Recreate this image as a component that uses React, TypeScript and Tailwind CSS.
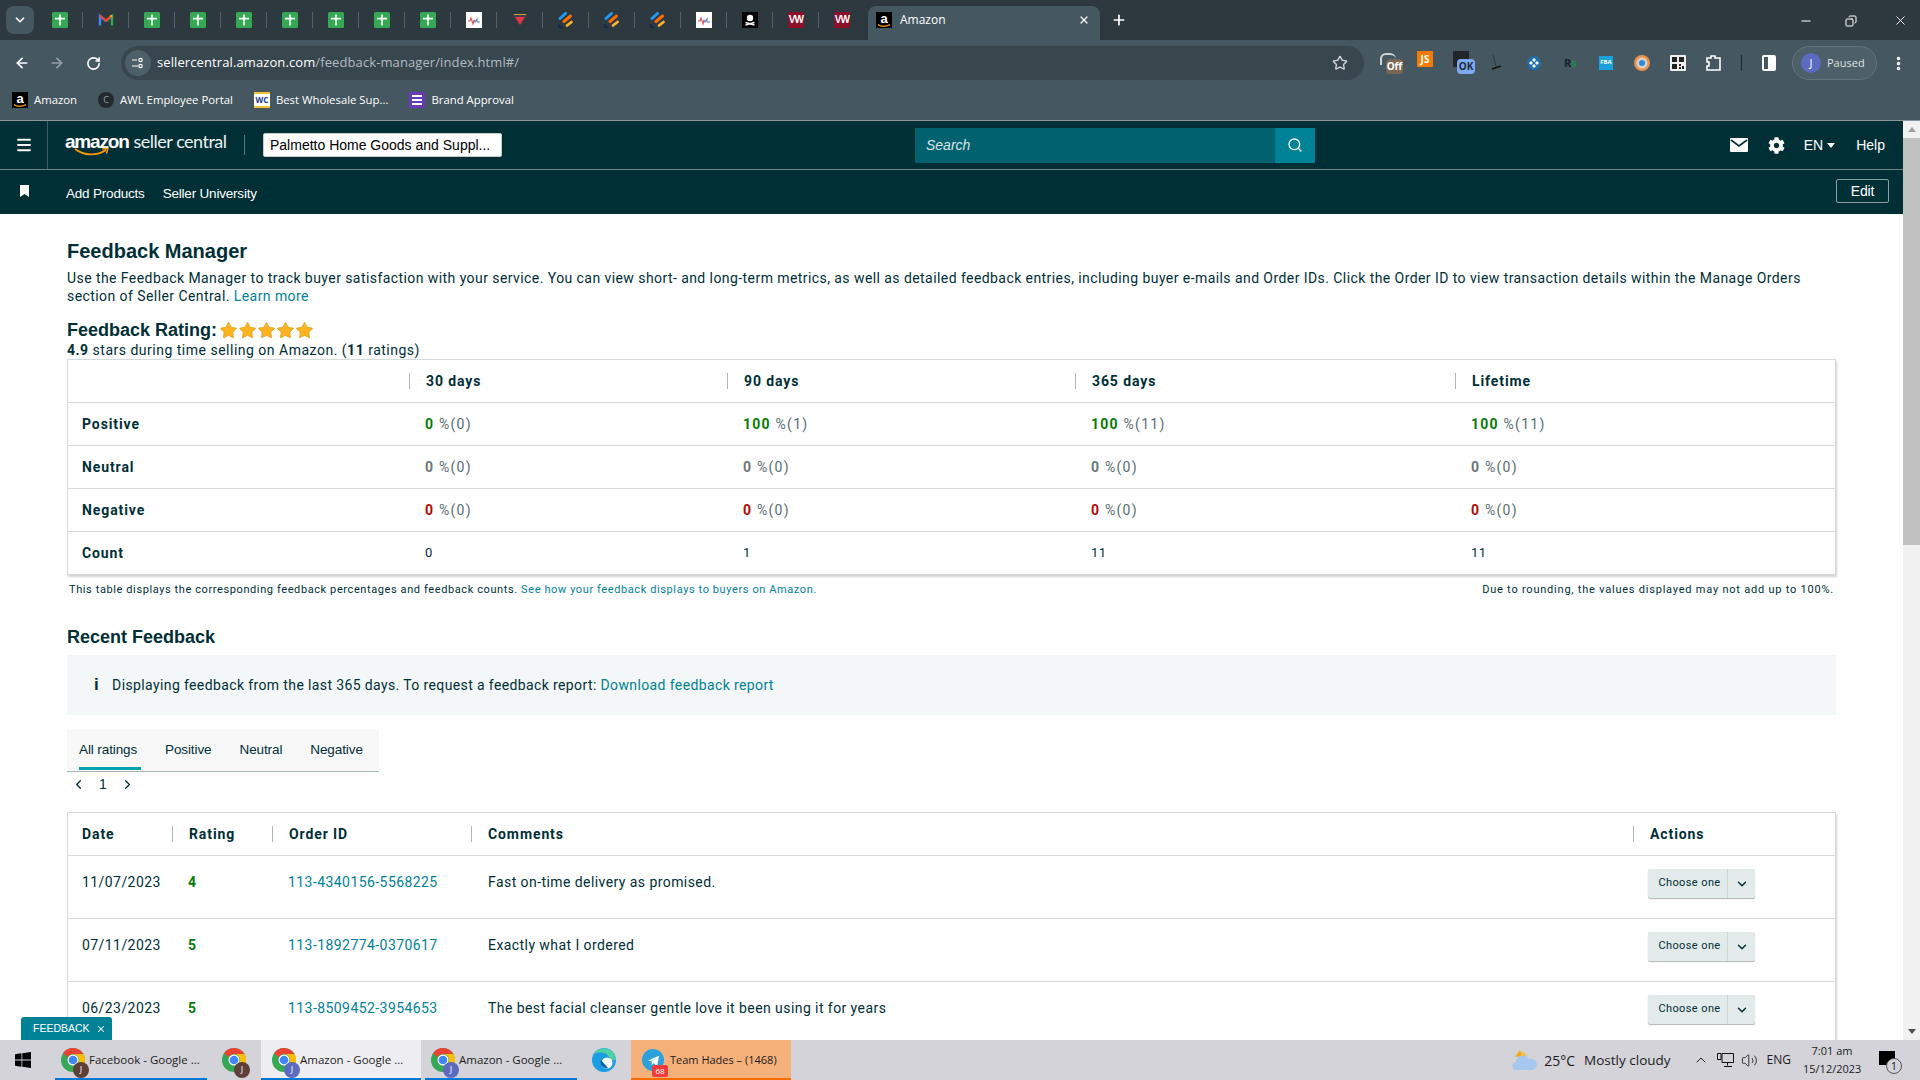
import { ArrowLeft, ArrowRight, ChevronDown, ChevronLeft, ChevronRight, ChevronUp, Copy, EllipsisVertical, Menu, Minus, Plus, RotateCw, Search, Star, Volume2, X } from "lucide-react";
import { FaCog } from "react-icons/fa";

const ui = "font-['Open_Sans',sans-serif]";
const ember = "font-['Liberation_Sans',sans-serif]";
const roboto = "font-['Roboto',sans-serif]";
const body = "font-['Roboto',sans-serif] tracking-[0.43px]";

type Fav = "sheet" | "gmail" | "pulse" | "tri" | "jira" | "skull" | "ww";

const tabs: Fav[] = ["sheet", "gmail", "sheet", "sheet", "sheet", "sheet", "sheet", "sheet", "sheet", "pulse", "tri", "jira", "jira", "jira", "pulse", "skull", "ww", "ww"];

function Favicon({ kind }: { kind: Fav }) {
  if (kind === "sheet") {
    return (
      <svg width="16" height="16" viewBox="0 0 16 16">
        <rect width="16" height="16" rx="1.5" fill="#34a853" />
        <path d="M7.2 2.500h1.600v3.300H13v1.600H8.800V13.500H7.200V7.400H3V5.800h4.200z" fill="#fff" />
      </svg>
    );
  }
  if (kind === "gmail") {
    return (
      <svg width="16" height="16" viewBox="0 0 16 16" fill="none">
        <path d="M2 13.500V4l6 5" stroke="#4285f4" strokeWidth="2.400" />
        <path d="M14 13.500V4L8 9" stroke="#34a853" strokeWidth="2.400" />
        <path d="M2 3.500L8 8.500l6-5" stroke="#ea4335" strokeWidth="2.200" />
        <path d="M14 3.500l-1.500 1.200" stroke="#fbbc04" strokeWidth="2.200" />
      </svg>
    );
  }
  if (kind === "pulse") {
    return (
      <svg width="16" height="16" viewBox="0 0 16 16" fill="none">
        <rect width="16" height="16" fill="#fff" />
        <path d="M2 9h2l1-3 2 6 1-4" stroke="#d9534f" strokeWidth="1.100" />
        <path d="M8 8l1 2 2-3v3h3" stroke="#5b7fbf" strokeWidth="1.100" />
      </svg>
    );
  }
  if (kind === "tri") {
    return (
      <svg width="16" height="16" viewBox="0 0 16 16">
        <path d="M0 2h16l-2 3H2z" fill="#4a3a44" />
        <path d="M2 2.500h12" stroke="#c9a13b" strokeWidth="1" />
        <path d="M3 5h10l-5 8z" fill="#e23744" />
      </svg>
    );
  }
  if (kind === "jira") {
    return (
      <svg width="16" height="16" viewBox="0 0 16 16" fill="none" strokeLinecap="round">
        <path d="M2 6.500L7.500 1.500" stroke="#1e9bf0" strokeWidth="3" />
        <path d="M6 9.500L12.500 4" stroke="#ff6d00" strokeWidth="3" />
        <path d="M9 13.500L13.500 10" stroke="#fbb32c" strokeWidth="2.800" />
        <path d="M0 16V11.500L5 16z" fill="#12284c" />
      </svg>
    );
  }
  if (kind === "skull") {
    return (
      <svg width="16" height="16" viewBox="0 0 16 16">
        <rect width="16" height="16" fill="#000" />
        <circle cx="8" cy="6" r="3.200" fill="#fff" />
        <path d="M3.500 10.500l9 2.500M12.500 10.500l-9 2.500" stroke="#fff" strokeWidth="1.400" />
      </svg>
    );
  }
  return (
    <div className={`w-4 h-4 bg-[#8c1029] text-white text-[10px] leading-4 text-center font-bold ${ember} tracking-[-0.8px] rounded-[1px]`}>VW</div>
  );
}

function AmazonFav() {
  return (
    <div className={`relative w-4 h-4 bg-black text-white text-[13px] leading-[13px] font-bold text-center ${ember}`}>
      a
      <svg width="12" height="4" viewBox="0 0 12 4" className="absolute left-0.5 bottom-0" fill="none">
        <path d="M0 .500c3 2.500 8 2.500 12 0" stroke="#f90" strokeWidth="1.200" />
      </svg>
    </div>
  );
}

function ChromeLogo({ badge, tone }: { badge: string; tone: string }) {
  return (
    <div className="relative w-6 h-6 shrink-0">
      <svg width="24" height="24" viewBox="0 0 24 24">
        <circle cx="12" cy="12" r="12" fill="#34a853" />
        <path d="M12 0a12 12 0 0 1 10.400 6H12a6 6 0 0 0-5.500 3.600L2.200 5A12 12 0 0 1 12 0z" fill="#ea4335" />
        <path d="M22.400 6A12 12 0 0 1 12 24l5.200-9A6 6 0 0 0 12 6z" fill="#fbbc04" />
        <circle cx="12" cy="12" r="5.500" fill="#fff" />
        <circle cx="12" cy="12" r="4.300" fill="#4285f4" />
      </svg>
      <div className={`absolute -right-1 -bottom-1.5 w-4 h-4 rounded-full ${tone} text-white text-[9px] leading-4 text-center`}>{badge}</div>
    </div>
  );
}

function TabStrip() {
  return (
    <div className="h-10 bg-[#2e383f] flex items-start pl-1.5 relative">
      <div className="mt-1.5 w-7 h-7 rounded-lg bg-[#455760] flex items-center justify-center mr-[3px]">
        <ChevronDown size={14} className="text-white" strokeWidth={3} />
      </div>
      {tabs.map((t, i) => (
        <div key={i} className="w-[46px] h-[34px] flex items-center justify-center relative shrink-0 mt-[3px]">
          <Favicon kind={t} />
          {i < tabs.length - 1 && <div className="absolute right-0 top-[9px] w-px h-4 bg-[#536169]" />}
        </div>
      ))}
      <div className={`w-[232px] h-[34px] mt-1.5 ml-[3px] rounded-t-lg bg-[#455760] flex items-center pl-2 pr-2.5 pb-1.5 text-white text-xs ${ui} shrink-0`}>
        <AmazonFav />
        <span className="ml-2">Amazon</span>
        <X size={12} strokeWidth={2.5} className="ml-auto" />
      </div>
      <Plus size={16} className="text-white mt-3 ml-[11px]" strokeWidth={2.5} />
      <div className="ml-auto flex items-center mt-[13px] text-white">
        <Minus size={14} className="mr-8" />
        <Copy size={12} className="mr-9 -scale-x-100" />
        <X size={15} className="mr-3" strokeWidth={1.5} />
      </div>
    </div>
  );
}

function ToolbarIcons() {
  return (
    <div className={`flex items-center h-[34px] text-white ${ui}`}>
      <div className="relative w-6 h-6 ml-4">
        <div className="absolute left-0 top-0.5 w-4 h-3 rounded-t-md border-t-2 border-l-2 border-[#cfd4d6]" />
        <div className="absolute left-1.5 top-2 w-[17px] h-[15px] rounded-sm bg-[#7d6650] text-[10px] leading-[15px] text-center font-bold">Off</div>
      </div>
      <div className="w-4 h-[16px] bg-[#f57c00] text-[10px] leading-[16px] text-center font-bold ml-[13px] -mt-2 rounded-[1px]">JS</div>
      <div className="relative w-6 h-6 ml-5">
        <div className="absolute left-0 top-0 w-4 h-4 bg-[#22262a]" />
        <div className="absolute left-1 top-2 w-[18px] h-[15px] rounded-sm bg-[#7daaf0] text-[#1d2b40] text-[10px] leading-[15px] text-center font-bold">OK</div>
      </div>
      <svg width="14" height="18" viewBox="0 0 14 18" className="ml-[13px]" fill="none">
        <path d="M3 1l3 11" stroke="#2c3135" strokeWidth="0.8" />
        <path d="M2 15l9-3" stroke="#111" strokeWidth="1.800" />
      </svg>
      <svg width="14" height="14" viewBox="0 0 14 14" className="ml-[23px]">
        <circle cx="7" cy="7" r="7" fill="#1f6fa8" />
        <path d="M7 2l2 2-2 2-2-2zM7 8l2 2-2 2-2-2zM4 5l2 2-2 2-2-2zM10 5l2 2-2 2-2-2z" fill="#fff" />
      </svg>
      <span className="text-[#14222a] text-[11px] font-bold ml-[23px] w-3 leading-3">R<span className="text-[#1c8a4b]">s</span></span>
      <div className="w-3.5 h-3.5 bg-[#1aa0dc] text-[6px] leading-[12px] text-center font-bold ml-[23px]">FBA</div>
      <svg width="16" height="16" viewBox="0 0 16 16" className="ml-[21px]">
        <circle cx="8" cy="8" r="8" fill="#e8924a" />
        <circle cx="8" cy="8" r="5.500" fill="#d9d0c8" />
        <circle cx="8" cy="8" r="3" fill="#2a8bd8" />
      </svg>
      <svg width="16" height="16" viewBox="0 0 16 16" className="ml-5">
        <rect width="16" height="16" rx="1" fill="#eee" />
        <path d="M2 2h5v5H2zM9 2h5v5H9zM2 9h5v5H2zM9 9h2v2H9zM12 11h2v3h-2zM9 12h2v2H9z" fill="#222" />
      </svg>
      <svg width="16" height="18" viewBox="0 0 16 18" className="ml-5" fill="none" stroke="#fff" strokeWidth="1.600">
        <path d="M1 4h4V2h4v2h5v12H1v-4h2V8H1z" />
      </svg>
      <div className="w-px h-4 bg-[#1f282d] ml-[19px]" />
      <div className="w-3.5 h-4 border-2 border-white rounded-[2px] flex justify-end ml-5">
        <div className="w-1.5 h-full bg-white" />
      </div>
      <div className="h-[34px] w-[85px] rounded-full border border-[#64747c] bg-[#4d5f68] flex items-center pl-2 ml-4">
        <div className="w-5 h-5 rounded-full bg-[#5c6bc0] text-[11px] leading-5 text-center mr-1.5">J</div>
        <span className="text-[#dde2e4] text-[11px]">Paused</span>
      </div>
      <EllipsisVertical size={17} strokeWidth={3} className="ml-[13px]" />
    </div>
  );
}

function Toolbar() {
  return (
    <div className="h-10 bg-[#455760] flex items-start pt-1.5 pl-3.5">
      <div className="h-[34px] flex items-center">
        <ArrowLeft size={16} className="text-white" strokeWidth={2.5} />
        <ArrowRight size={16} className="text-[#94a0a6] ml-[19px]" strokeWidth={2.5} />
        <RotateCw size={15} className="text-white ml-[21px]" strokeWidth={2.5} />
      </div>
      <div className={`w-[1243px] ml-[20px] h-[34px] rounded-full bg-[#38464e] flex items-center pl-1 pr-4 text-[13px] ${ui} tracking-[0.1px]`}>
        <div className="w-[26px] h-[26px] rounded-full bg-[#4d5f68] flex items-center justify-center mr-1.5 text-white">
          <svg width="12" height="12" viewBox="0 0 12 12" fill="none" stroke="#fff" strokeWidth="1.200">
            <path d="M0 3h5M0 9h6" />
            <circle cx="8.500" cy="3" r="1.700" />
            <circle cx="8.500" cy="9" r="1.700" />
          </svg>
        </div>
        <span className="text-white">sellercentral.amazon.com</span>
        <span className="text-[#b3bcc1]">/feedback-manager/index.html#/</span>
        <Star size={16} className="ml-auto text-[#d6dadc]" strokeWidth={2} />
      </div>
      <ToolbarIcons />
    </div>
  );
}

function Bookmarks() {
  return (
    <div className={`h-10 bg-[#455760] border-b border-[#8a979d] box-content flex items-center pl-3 gap-[21px] text-white text-[11.35px] ${ui}`}>
      <div className="flex items-center gap-1.5">
        <AmazonFav />
        Amazon
      </div>
      <div className="flex items-center gap-1.5">
        <div className="w-4 h-4 rounded-full bg-[#222a30] text-[#9aa4aa] text-[9px] leading-4 text-center">C</div>
        AWL Employee Portal
      </div>
      <div className="flex items-center gap-1.5">
        <div className="w-4 h-4 bg-white border-y-2 border-[#f2c230] text-[#1a3a8f] text-[8px] leading-3 font-bold text-center">WC</div>
        Best Wholesale Sup...
      </div>
      <div className="flex items-center gap-1.5">
        <div className="w-4 h-4 bg-[#673ab7] flex flex-col justify-center gap-[2px] pl-[3px]">
          <div className="w-2.5 h-[2px] bg-white" />
          <div className="w-2.5 h-[2px] bg-white" />
          <div className="w-2.5 h-[2px] bg-white" />
        </div>
        Brand Approval
      </div>
    </div>
  );
}

function SellerHeader() {
  return (
    <div className={`bg-[#002f36] text-white ${ember} shrink-0`}>
      <div className="h-[49px] flex items-center border-b border-[#6c8285] pr-[18px]">
        <div className="w-[48px] h-full border-r border-[#3f5c61] flex items-center justify-center">
          <Menu size={18} strokeWidth={2.5} />
        </div>
        <div className="relative ml-[17px] w-[161px] flex items-baseline whitespace-nowrap -mt-1.5">
          <span className="text-[19px] font-bold tracking-[-1.2px]">amazon</span>
          <span className="font-['Lato',sans-serif] text-[18px] font-normal ml-[5px] tracking-[-0.5px] text-[#eef2f2]">seller central</span>
          <svg width="36" height="9" viewBox="0 0 36 9" className="absolute left-[9px] top-[20px]" fill="none">
            <path d="M1 1c9 7 22 7 31 1" stroke="#f90" strokeWidth="1.800" />
            <path d="M28 1l6-.5-1.500 5" stroke="#f90" strokeWidth="1.400" />
          </svg>
        </div>
        <div className="w-px h-5 bg-[#5d767a] ml-[18px]" />
        <div className="ml-[18px] w-[239px] h-6 bg-white rounded-[2px] text-black text-[14px] pl-1.5 border border-[#c9c9c9] flex items-center whitespace-nowrap">
          Palmetto Home Goods and Suppl...
        </div>
        <div className="ml-[413px] w-[400px] h-[35px] flex">
          <div className="flex-1 bg-[#00626f] text-[#d7e5e7] italic text-sm leading-[35px] pl-[11px]">Search</div>
          <div className="w-10 bg-[#008296] flex items-center justify-center">
            <Search size={16} strokeWidth={2} />
          </div>
        </div>
        <div className="ml-auto flex items-center text-[14px]">
          <svg width="18" height="14" viewBox="0 0 18 14" className="mr-5">
            <rect width="18" height="14" rx="1" fill="#fff" />
            <path d="M1 2l8 6 8-6" stroke="#002f36" strokeWidth="1.600" fill="none" />
          </svg>
          <FaCog size={17} className="mr-[19px]" />
          <span>EN</span>
          <div className="w-0 h-0 border-x-[4px] border-x-transparent border-t-[5px] border-t-white ml-1 mr-[21px]" />
          <span>Help</span>
        </div>
      </div>
      <div className="h-[44px] flex items-center pt-1 pr-[14px] text-[13.5px] tracking-[-0.2px]">
        <svg width="9" height="12" viewBox="0 0 9 12" className="ml-[20px] -mt-1.5">
          <path d="M0 0h9v12L4.500 9 0 12z" fill="#fff" />
        </svg>
        <span className="ml-[37px]">Add Products</span>
        <span className="ml-[18px]">Seller University</span>
        <div className="ml-auto w-[53px] h-[24px] -mt-1.5 border border-[#8aa0a3] rounded-[2px] text-center leading-[22px] text-[14px]">Edit</div>
      </div>
    </div>
  );
}

function Val({ n, tone, c }: { n: string; tone: string; c: string }) {
  return (
    <div className={`pl-4 ${roboto} text-[14px] tracking-[1.25px] text-[#5a6c70]`}>
      <span className={`font-bold ${tone}`}>{n}</span> %({c})
    </div>
  );
}

const metrics = [
  { label: "Positive", tone: "text-[#067d06]", rows: [["0", "0"], ["100", "1"], ["100", "11"], ["100", "11"]] },
  { label: "Neutral", tone: "text-[#6c7778]", rows: [["0", "0"], ["0", "0"], ["0", "0"], ["0", "0"]] },
  { label: "Negative", tone: "text-[#b30a0a]", rows: [["0", "0"], ["0", "0"], ["0", "0"], ["0", "0"]] },
];

const ratingCols = "grid grid-cols-[341px_318px_348px_380px_1fr] items-center";

function HeadCell({ label }: { label: string }) {
  return (
    <div className="border-l border-[#aab7b8] h-4 pl-4 leading-4 font-bold text-[14px] tracking-[0.9px] text-[#002f36]">{label}</div>
  );
}

function RatingTable() {
  return (
    <div className={`border border-[#d5dbdb] bg-white shadow-[1px_2px_2px_rgba(0,0,0,0.18)] ${body}`}>
      <div className={`${ratingCols} h-[43px] border-b border-[#d5dbdb]`}>
        <div />
        <HeadCell label="30 days" />
        <HeadCell label="90 days" />
        <HeadCell label="365 days" />
        <HeadCell label="Lifetime" />
      </div>
      {metrics.map((m) => (
        <div key={m.label} className={`${ratingCols} h-[43px] border-b border-[#d5dbdb]`}>
          <div className="pl-[14px] font-bold text-[14px] tracking-[0.9px] text-[#002f36]">{m.label}</div>
          {m.rows.map((r, i) => (
            <Val key={i} n={r[0]} c={r[1]} tone={m.tone} />
          ))}
        </div>
      ))}
      <div className={`${ratingCols} h-[42px] text-[13px] text-[#002f36]`}>
        <div className="pl-[14px] font-bold text-[14px] tracking-[0.9px]">Count</div>
        <div className="pl-4">0</div>
        <div className="pl-4">1</div>
        <div className="pl-4">11</div>
        <div className="pl-4">11</div>
      </div>
    </div>
  );
}

const recent = [
  { date: "11/07/2023", rating: "4", order: "113-4340156-5568225", comment: "Fast on-time delivery as promised." },
  { date: "07/11/2023", rating: "5", order: "113-1892774-0370617", comment: "Exactly what I ordered" },
  { date: "06/23/2023", rating: "5", order: "113-8509452-3954653", comment: "The best facial cleanser gentle love it been using it for years" },
];

const feedbackCols = "grid grid-cols-[104px_100px_199px_1162px_1fr]";

function FeedbackTable() {
  return (
    <div className={`border border-[#d5dbdb] bg-white shadow-[1px_2px_2px_rgba(0,0,0,0.18)] ${body} text-[14px] text-[#002f36]`}>
      <div className={`${feedbackCols} h-[43px] items-center border-b border-[#d5dbdb] font-bold`}>
        <div className="pl-[14px] tracking-[0.9px]">Date</div>
        <HeadCell label="Rating" />
        <HeadCell label="Order ID" />
        <HeadCell label="Comments" />
        <HeadCell label="Actions" />
      </div>
      {recent.map((r) => (
        <div key={r.order} className={`${feedbackCols} h-[63px] border-b border-[#d5dbdb] pt-4`}>
          <div className="pl-[14px] leading-[20px]">{r.date}</div>
          <div className="pl-4 leading-[20px] font-bold text-[#067d06]">{r.rating}</div>
          <div className="pl-[16px] leading-[20px] text-[#008296]">{r.order}</div>
          <div className="pl-[17px] leading-[20px]">{r.comment}</div>
          <div className="pl-[15px] -mt-[3px]">
            <div className="w-[107px] h-[29px] rounded-[2px] bg-[#e3eaea] shadow-[0_1px_1px_rgba(0,0,0,0.3)] flex items-center text-[11px] tracking-[0.4px]">
              <div className="w-[80px] h-full border-r border-[#cdd5d5] text-center leading-[28px] pl-1">Choose one</div>
              <div className="flex-1 flex items-center justify-center">
                <ChevronDown size={14} strokeWidth={2.5} />
              </div>
            </div>
          </div>
        </div>
      ))}
    </div>
  );
}

function Content() {
  return (
    <div className="relative flex-1 overflow-hidden bg-white px-[67px] pt-[25px] text-[#002f36]">
      <h1 className={`${ember} text-[20px] leading-6 font-bold`}>Feedback Manager</h1>
      <p className={`${body} mt-[6px] text-[14px] leading-[18px]`}>
        Use the Feedback Manager to track buyer satisfaction with your service. You can view short- and long-term metrics, as well as detailed feedback entries, including buyer e-mails and Order IDs. Click the Order ID to view transaction details within the Manage Orders section of Seller Central.{" "}
        <span className="text-[#008296]">Learn more</span>
      </p>
      <div className={`${ember} mt-[13px] h-6 flex items-center text-[18px] font-bold`}>
        Feedback Rating:
        <div className="flex ml-0.5">
          {[0, 1, 2, 3, 4].map((s) => (
            <Star key={s} size={19} className="text-[#e09f1f] fill-[#fbb321]" strokeWidth={1} />
          ))}
        </div>
      </div>
      <p className={`${roboto} text-[14px] tracking-[0.5px] leading-[17px]`}>
        <b>4.9</b> stars during time selling on Amazon. (<b>11</b> ratings)
      </p>
      <RatingTable />
      <div className={`${roboto} flex justify-between px-0.5 mt-[7px] h-4 text-[11px] leading-4`}>
        <span className="tracking-[0.6px]">
          This table displays the corresponding feedback percentages and feedback counts.{" "}
          <span className="text-[#008296]">See how your feedback displays to buyers on Amazon.</span>
        </span>
        <span className="tracking-[0.78px]">Due to rounding, the values displayed may not add up to 100%.</span>
      </div>
      <h2 className={`${ember} mt-[28px] text-[18px] leading-[22px] font-bold`}>Recent Feedback</h2>
      <div className={`${roboto} mt-[7px] h-[60px] bg-[#f3f7f7] flex items-center pl-[27px] text-[14px] tracking-[0.38px]`}>
        <span className={`${ember} font-bold text-[17px] mr-[13px]`}>i</span>
        Displaying feedback from the last 365 days. To request a feedback report:&nbsp;
        <span className="text-[#008296]">Download feedback report</span>
      </div>
      <div className={`${ember} mt-[14px] w-[312px] h-[43px] bg-[#f8f8f8] border-b border-[#aab7b8] flex text-[13.5px] tracking-[-0.1px]`}>
        <div className="ml-3 h-[41px] border-b-[3px] border-[#00a1b3] pt-[11px] w-[62px] font-medium whitespace-nowrap">All ratings</div>
        <div className="ml-[24px] pt-[11px]">Positive</div>
        <div className="ml-[28px] pt-[11px]">Neutral</div>
        <div className="ml-[28px] pt-[11px]">Negative</div>
      </div>
      <div className={`${ember} h-6 flex items-center text-[14px] mb-4`}>
        <ChevronLeft size={15} className="ml-[4px]" strokeWidth={2} />
        <span className="ml-[13px]">1</span>
        <ChevronRight size={15} className="ml-[13px]" strokeWidth={2} />
      </div>
      <FeedbackTable />
      <div className={`absolute left-[21px] bottom-0 w-[91px] h-[23px] bg-[#008296] rounded-t-[3px] text-white text-[10.5px] ${ember} flex items-center pl-3 gap-1.5`}>
        FEEDBACK
        <X size={10} strokeWidth={2.5} />
      </div>
    </div>
  );
}

function Scrollbar() {
  return (
    <div className="w-[17px] bg-[#f1f1f1] flex flex-col items-center shrink-0 relative">
      <div className="h-[17px] flex items-center justify-center">
        <div className="w-0 h-0 border-x-[4px] border-x-transparent border-b-[5px] border-b-[#a3a3a3]" />
      </div>
      <div className="w-full h-[407px] bg-[#c1c1c1]" />
      <div className="mt-auto h-[17px] flex items-center justify-center">
        <div className="w-0 h-0 border-x-[4px] border-x-transparent border-t-[5px] border-t-[#505050]" />
      </div>
    </div>
  );
}

function TaskButton({ label, tone, active, width, pad }: { label: string; tone: string; active?: boolean; width: string; pad: string }) {
  return (
    <div className={`relative ${width} ${pad} flex items-center gap-1 ${active ? "bg-[#eeeef2]" : ""}`}>
      <ChromeLogo badge="J" tone={tone} />
      <span className="whitespace-nowrap">{label}</span>
      <div className="absolute left-0 right-0 bottom-0 h-0.5 bg-[#0078d4]" />
    </div>
  );
}

function Taskbar() {
  return (
    <div className={`h-10 bg-[#d3d3d9] flex items-stretch shrink-0 text-[11.5px] text-[#1c1c1c] ${ui}`}>
      <div className="w-[55px] flex items-center pl-[15px]">
        <svg width="16" height="16" viewBox="0 0 16 16" fill="#000">
          <path d="M0 2.200l6.500-.9v6.200H0zM7.300 1.200L16 0v7.500H7.300zM0 8.400h6.500v6.300L0 13.800zM7.300 8.400H16V16l-8.700-1.200z" />
        </svg>
      </div>
      <TaskButton label="Facebook - Google ..." tone="bg-[#5d4037]" width="w-[152px]" pad="pl-1.5" />
      <div className="w-[54px] flex items-center justify-center">
        <ChromeLogo badge="J" tone="bg-[#5d4037]" />
      </div>
      <TaskButton label="Amazon - Google ..." tone="bg-[#5c6bc0]" active width="w-[160px]" pad="pl-[11px]" />
      <div className="w-1" />
      <TaskButton label="Amazon - Google ..." tone="bg-[#5c6bc0]" width="w-[152px]" pad="pl-1.5" />
      <div className="w-[54px] flex items-center justify-center">
        <svg width="24" height="24" viewBox="0 0 24 24">
          <circle cx="12" cy="12" r="12" fill="#1b9de2" />
          <path d="M24 12a12 12 0 0 0-23-4.500C3 3.500 14 3 17 9c1 2-1 3-3 3H24z" fill="#4fd1a5" />
          <circle cx="15" cy="15" r="5.500" fill="#fff" />
          <path d="M9 12a6 6 0 0 0 7 8" fill="#0b5cad" />
        </svg>
      </div>
      <div className="relative w-[160px] bg-[#f6b17a] flex items-center pl-[11px] gap-1.5 text-[11px]">
        <div className="relative w-[22px] h-[22px] rounded-full bg-[#2aa1da] flex items-center justify-center shrink-0">
          <svg width="13" height="13" viewBox="0 0 14 14">
            <path d="M1 7l12-5-2 11-4-3-2 2V8l6-4-7 4z" fill="#fff" />
          </svg>
          <div className="absolute -right-1 -bottom-1.5 w-4 h-3 rounded-[2px] bg-[#ee3b3b] text-white text-[8px] leading-3 text-center">68</div>
        </div>
        <span className="whitespace-nowrap">Team Hades – (1468)</span>
        <div className="absolute left-0 right-0 bottom-0 h-0.5 bg-[#f76b00]" />
      </div>
      <div className="ml-auto flex items-center">
        <svg width="26" height="24" viewBox="0 0 26 24" className="mr-1.5">
          <path d="M8 2l3 6-8 1z" fill="#f5a623" />
          <path d="M9 4a6 6 0 0 1 6 5l-6 1z" fill="#f5c04a" />
          <path d="M5 22a4 4 0 0 1-1-8 7 7 0 0 1 13-3 5.500 5.500 0 0 1 4 11z" fill="#a6c8ee" />
        </svg>
        <span className="text-[14px] mr-[9px]">25°C</span>
        <span className="text-[13.5px] mr-[22px]">Mostly cloudy</span>
        <ChevronUp size={16} className="mr-2" strokeWidth={1.5} />
        <svg width="17" height="14" viewBox="0 0 17 14" className="mr-[7px]" fill="none" stroke="#111">
          <path d="M5 .500h11.500v9H5zM.5 .500H4v6H.5zM10.500 9.500v3M7 13.500h8" />
        </svg>
        <Volume2 size={17} className="mr-[9px]" strokeWidth={1.2} />
        <span className="text-[12px] mr-3">ENG</span>
        <div className="text-[11px] text-center leading-[18px] w-[58px] mr-[18px]">
          <div>7:01 am</div>
          <div>15/12/2023</div>
        </div>
        <div className="relative w-4 h-3.5 bg-black mr-[25px] mb-1">
          <div className="absolute left-[7px] top-[7px] w-4 h-4 rounded-full border border-[#555] bg-[#d3d3d9] text-[11px] leading-[14px] text-center">1</div>
        </div>
      </div>
    </div>
  );
}

export default function App() {
  return (
    <div className="w-[1920px] h-[1080px] flex flex-col overflow-hidden bg-white">
      <TabStrip />
      <Toolbar />
      <Bookmarks />
      <div className="flex-1 flex min-h-0">
        <div className="flex-1 flex flex-col min-w-0">
          <SellerHeader />
          <Content />
        </div>
        <Scrollbar />
      </div>
      <Taskbar />
    </div>
  );
}
